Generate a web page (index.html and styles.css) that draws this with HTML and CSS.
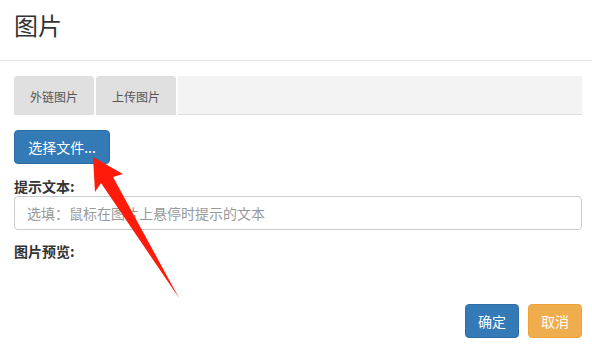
FILE: index.html
```html
<!DOCTYPE html>
<html>
<head>
<meta charset="utf-8">
<link rel="stylesheet" href="styles.css">
</head>
<body>
<div class="dialog">
  <div class="header"><h1 class="title">图片</h1></div>
  <div class="content">
    <div class="tabs">
      <div class="tab">外链图片</div>
      <div class="tab">上传图片</div>
      <div class="tab-fill"></div>
    </div>
    <div class="upload-row"><button class="btn btn-primary btn-file">选择文件...</button></div>
    <label class="label">提示文本:</label>
    <input class="input" type="text" placeholder="选填：鼠标在图片上悬停时提示的文本">
    <div class="label preview-label">图片预览:</div>
    <div class="footer">
      <button class="btn btn-primary">确定</button>
      <button class="btn btn-warning">取消</button>
    </div>
  </div>
  <svg class="arrow" width="592" height="350" viewBox="0 0 592 350">
    <polygon points="93,157 123,174 113,177 179,298 101,183 95,192" fill="#ff1a0a"/>
  </svg>
</div>
</body>
</html>
```
FILE: styles.css
```css
* { box-sizing: border-box; }
html, body { margin: 0; padding: 0; background: #fff; }
body {
  font-family: "Noto Sans CJK SC", "Liberation Sans", sans-serif;
  font-size: 14px;
  color: #333;
  width: 592px;
  height: 350px;
  overflow: hidden;
}
.dialog { position: relative; width: 592px; height: 350px; }
.header {
  height: 61px;
  border-bottom: 1px solid #e5e5e5;
  padding: 0 14px;
  display: flex;
  align-items: center;
}
.title {
  margin: 0;
  font-size: 24px;
  font-weight: normal;
  line-height: 1;
  color: #333;
  margin-top: -10px;
}
.content { padding: 15px 10px 0 14px; }
.tabs { display: flex; height: 39px; }
.tab {
  width: 80px;
  margin-right: 2px;
  background: #e0e0e0;
  border-radius: 3px 3px 0 0;
  font-size: 12px;
  color: #555;
  display: flex;
  align-items: center;
  justify-content: center;
  padding-top: 2px;
}
.tab-fill {
  flex: 1;
  background: #f3f3f3;
  border-bottom: 1px solid #dcdcdc;
}
.upload-row { margin-top: 15px; }
.btn {
  font-family: inherit;
  font-size: 14px;
  color: #fff;
  border: 1px solid transparent;
  border-radius: 4px;
  height: 34px;
  padding: 0 12px;
  line-height: 1;
  cursor: pointer;
}
.btn-primary { background: #337ab7; border-color: #2e6da4; }
.btn-warning { background: #f0ad4e; border-color: #eea236; }
.btn-file { width: 96px; padding: 0; }
.label {
  display: block;
  font-weight: bold;
  font-size: 14px;
  line-height: 20px;
  margin-top: 12px;
  color: #333;
}
.input {
  display: block;
  width: 568px;
  height: 34px;
  margin-top: 0px;
  border: 1px solid #ccc;
  border-radius: 4px;
  padding: 0 12px;
  font-family: inherit;
  font-size: 14px;
  color: #555;
}
.input::placeholder { color: #999; }
.preview-label { margin-top: 11px; }
.footer {
  display: flex;
  justify-content: flex-end;
  gap: 9px;
  margin-top: 43px;
}
.footer .btn { width: 54px; padding: 0; }
.arrow { position: absolute; left: 0; top: 0; pointer-events: none; }
```
